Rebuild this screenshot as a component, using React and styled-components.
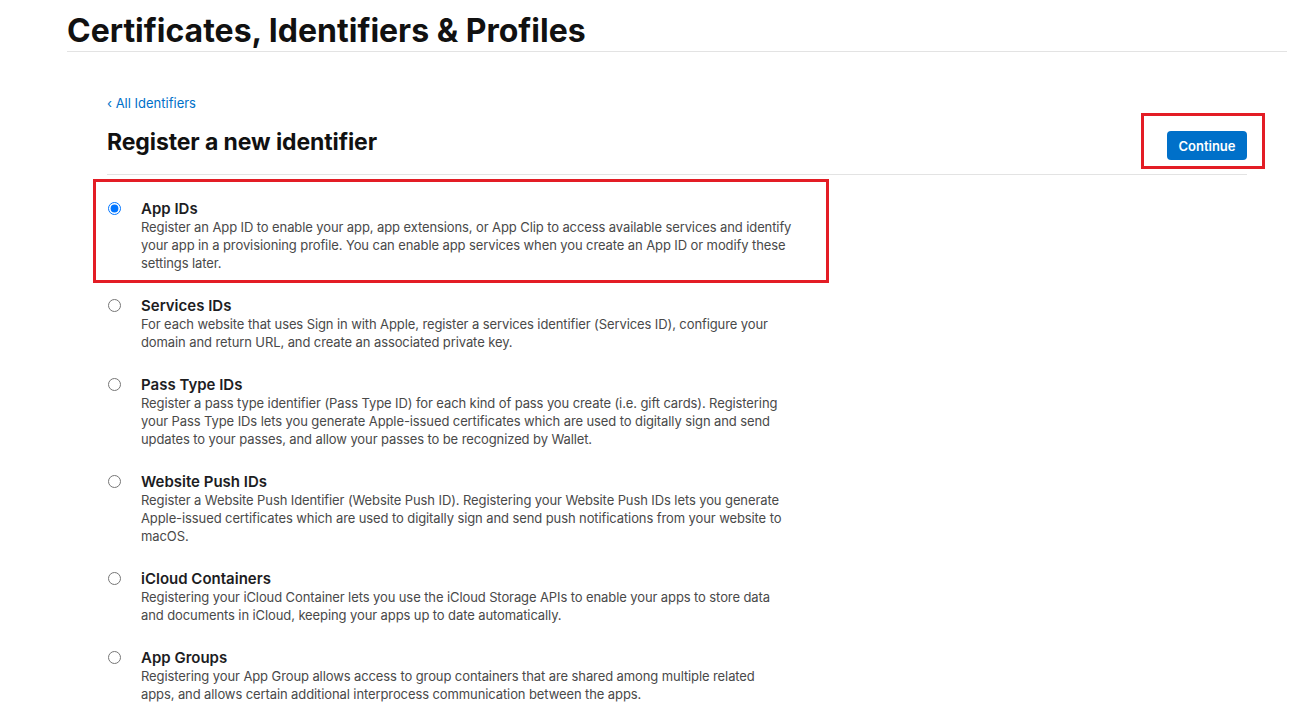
import React, { useState } from 'react';
import styled, { createGlobalStyle } from 'styled-components';

const GlobalStyle = createGlobalStyle`
  body {
    margin: 0;
    background: #fff;
    font-family: Inter, "Noto Sans", "Liberation Sans", sans-serif;
    color: #1d1d1f;
  }
`

const Page = styled.div`
  padding: 12px 17px 0 67px;
`

const Header = styled.header`
  border-bottom: 1px solid #e3e3e3;
  padding-bottom: 1px;
`

const PageTitle = styled.h1`
  margin: 0;
  font-size: 32px;
  line-height: 38px;
  font-weight: 700;
  letter-spacing: 0;
  color: #111;
`

const Content = styled.main`
  padding: 40px 40px 0;
`

const BackLink = styled.a`
  display: inline-block;
  font-size: 13px;
  line-height: 18px;
  color: #0070c9;
  text-decoration: none;
`

const TitleRow = styled.div`
  display: flex;
  justify-content: space-between;
  align-items: flex-start;
  padding-top: 16px;
  padding-bottom: 14px;
  border-bottom: 1px solid #e3e3e3;
`

const SectionTitle = styled.h2`
  margin: 0;
  font-size: 23px;
  line-height: 28px;
  font-weight: 700;
  letter-spacing: -0.1px;
  color: #111;
`

const Marked = styled.div`
  position: relative;
`

const Frame = styled.span`
  position: absolute;
  border: 3px solid #e31d25;
  pointer-events: none;
  left: ${p => p.$left}px;
  top: ${p => p.$top}px;
  width: ${p => p.$width}px;
  height: ${p => p.$height}px;
  box-sizing: border-box;
`

const Button = styled.button`
  margin-top: 3px;
  width: 80px;
  height: 29px;
  border: 0;
  border-radius: 4px;
  background: #0070c9;
  color: #fff;
  font-family: inherit;
  font-size: 13px;
  font-weight: 600;
  cursor: pointer;
`

const List = styled.div`
  padding-top: 25px;
  display: flex;
  flex-direction: column;
  gap: 25px;
`

const Option = styled.label`
  display: flex;
  align-items: flex-start;
  gap: 20px;
  cursor: pointer;
`

const Radio = styled.input`
  margin: 2px 0 0 1px;
  width: 13px;
  height: 13px;
  flex: none;
  accent-color: #0075ff;
`

const Text = styled.div`
  max-width: 650.5px;
`

const OptionTitle = styled.div`
  font-size: 15px;
  line-height: 18px;
  font-weight: 600;
  color: #1d1d1f;
`

const Desc = styled.div`
  font-size: 13px;
  line-height: 18px;
  letter-spacing: -0.1px;
  color: #494949;
`

const options = [
  {
    id: 'app',
    title: 'App IDs',
    desc: 'Register an App ID to enable your app, app extensions, or App Clip to access available services and identify your app in a provisioning profile. You can enable app services when you create an App ID or modify these settings later.',
  },
  {
    id: 'services',
    title: 'Services IDs',
    desc: 'For each website that uses Sign in with Apple, register a services identifier (Services ID), configure your domain and return URL, and create an associated private key.',
  },
  {
    id: 'pass',
    title: 'Pass Type IDs',
    desc: 'Register a pass type identifier (Pass Type ID) for each kind of pass you create (i.e. gift cards). Registering your Pass Type IDs lets you generate Apple-issued certificates which are used to digitally sign and send updates to your passes, and allow your passes to be recognized by Wallet.',
  },
  {
    id: 'push',
    title: 'Website Push IDs',
    desc: 'Register a Website Push Identifier (Website Push ID). Registering your Website Push IDs lets you generate Apple-issued certificates which are used to digitally sign and send push notifications from your website to macOS.',
  },
  {
    id: 'icloud',
    title: 'iCloud Containers',
    desc: 'Registering your iCloud Container lets you use the iCloud Storage APIs to enable your apps to store data and documents in iCloud, keeping your apps up to date automatically.',
  },
  {
    id: 'groups',
    title: 'App Groups',
    desc: 'Registering your App Group allows access to group containers that are shared among multiple related apps, and allows certain additional interprocess communication between the apps.',
  },
]

export default function App() {
  const [selected, setSelected] = useState('app')

  return (
    <>
      <GlobalStyle />
      <Page>
        <Header>
          <PageTitle>Certificates, Identifiers &amp; Profiles</PageTitle>
        </Header>
        <Content>
          <BackLink href="#">&lsaquo; All Identifiers</BackLink>
          <TitleRow>
            <SectionTitle>Register a new identifier</SectionTitle>
            <Marked>
              <Button type="button">Continue</Button>
              <Frame $left={-26} $top={-15} $width={124} $height={56} />
            </Marked>
          </TitleRow>
          <List>
            {options.map(opt => {
              const row = (
                <Option key={opt.id}>
                  <Radio
                    type="radio"
                    name="identifier"
                    checked={selected === opt.id}
                    onChange={() => setSelected(opt.id)}
                  />
                  <Text>
                    <OptionTitle>{opt.title}</OptionTitle>
                    <Desc>{opt.desc}</Desc>
                  </Text>
                </Option>
              )
              if (opt.id === 'app') {
                return (
                  <Marked key={opt.id}>
                    {row}
                    <Frame $left={-14} $top={-21} $width={736} $height={104} />
                  </Marked>
                )
              }
              return row
            })}
          </List>
        </Content>
      </Page>
    </>
  )
}
